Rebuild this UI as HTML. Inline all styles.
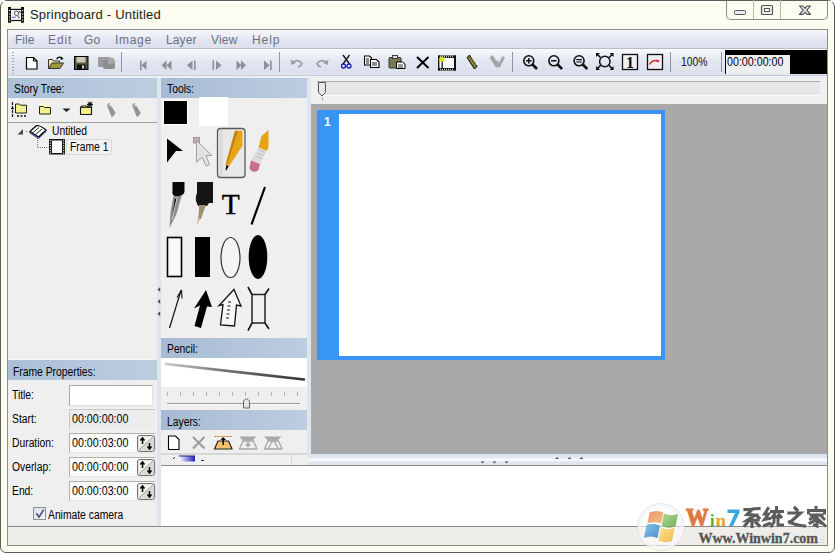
<!DOCTYPE html>
<html><head><meta charset="utf-8">
<style>
*{margin:0;padding:0;box-sizing:border-box}
html,body{width:835px;height:553px;overflow:hidden;background:#fff}
body{position:relative;font-family:"Liberation Sans",sans-serif;font-size:11px;color:#000}
.a{position:absolute}
.t{position:absolute;white-space:nowrap;line-height:1}
.u{position:absolute;white-space:nowrap;line-height:1;font-size:12px;transform:scaleX(.86);transform-origin:0 0}
</style></head><body>
<!-- window frame -->
<div class="a" style="left:0;top:0;width:835px;height:553px;background:#fcfcf0;border:1px solid #5c5c58;border-radius:7px 7px 6px 6px"></div>
<div class="a" style="left:1px;top:1px;width:833px;height:1px;background:#fff;border-radius:6px 6px 0 0"></div>

<!-- title -->
<div class="a" id="appicon" style="left:8px;top:7px;width:16px;height:16px"></div>
<div class="t" style="left:30px;top:8px;font-size:13px;letter-spacing:0.2px;color:#1a1a1a">Springboard - Untitled</div>

<!-- caption buttons -->
<div class="a" style="left:726px;top:0px;width:102px;height:20px;border:1px solid #8a8a80;border-top:1px solid #5c5c58;border-radius:0 0 5px 5px;background:#fcfcf0"></div>
<div class="a" style="left:753px;top:0;width:1px;height:19px;background:#b8b8ae"></div>
<div class="a" style="left:780px;top:0;width:1px;height:19px;background:#b8b8ae"></div>

<!-- inner client frame -->
<div class="a" style="left:7px;top:29px;width:821px;height:517px;border:1px solid #8c8c88;background:#f0f0f0"></div>

<!-- menu bar -->
<div class="a" style="left:8px;top:30px;width:819px;height:18px;background:linear-gradient(#f6f7fb 0%,#eceef6 35%,#e1e4f0 60%,#dde1ee 100%)"></div>
<div class="a" style="left:8px;top:48px;width:819px;height:1px;background:#b9bdc8"></div>

<!-- toolbar -->
<div class="a" style="left:8px;top:49px;width:819px;height:27px;background:linear-gradient(#fbfcfe 0%,#f2f4f9 12%,#e2e6f1 45%,#dce1ee 80%,#e0e4ef 100%)"></div>
<div class="a" style="left:8px;top:75px;width:819px;height:1px;background:#c5cbd8"></div>

<!-- panels background area -->
<div class="a" style="left:8px;top:76px;width:819px;height:450px;background:#dde6ef"></div>

<div class="a" style="left:8px;top:76px;width:819px;height:2px;background:linear-gradient(#f4f6fa,#e6ebf2)"></div>
<!-- story tree panel -->
<div class="a" style="left:8px;top:78px;width:149px;height:282px;background:#efefef"></div>
<div class="a" style="left:8px;top:359px;width:149px;height:1px;background:#f4f6fa"></div>
<div class="a" style="left:8px;top:78px;width:149px;height:20px;background:linear-gradient(90deg,#abc0d7,#bccde0)"></div>
<div class="a" style="left:8px;top:122px;width:149px;height:1px;background:#a0a0a0"></div>

<!-- frame properties panel -->
<div class="a" style="left:8px;top:360px;width:149px;height:166px;background:#efefef"></div>
<div class="a" style="left:8px;top:360px;width:149px;height:20px;background:linear-gradient(90deg,#abc0d7,#bccde0)"></div>

<!-- tools panel -->
<div class="a" style="left:161px;top:78px;width:146px;height:260px;background:#efefef"></div>
<div class="a" style="left:161px;top:78px;width:146px;height:20px;background:linear-gradient(90deg,#a6bbd3,#bccde0)"></div>

<!-- pencil panel -->
<div class="a" style="left:161px;top:338px;width:146px;height:72px;background:#efefef"></div>
<div class="a" style="left:161px;top:338px;width:146px;height:20px;background:linear-gradient(90deg,#a6bbd3,#bccde0)"></div>
<div class="a" style="left:161px;top:358px;width:146px;height:29px;background:#fff"></div>

<!-- layers panel -->
<div class="a" style="left:161px;top:410px;width:146px;height:55px;background:#efefef"></div>
<div class="a" style="left:291px;top:455px;width:1px;height:10px;background:#d8d8d8"></div>
<div class="a" style="left:161px;top:410px;width:146px;height:20px;background:linear-gradient(90deg,#a6bbd3,#bccde0)"></div>

<!-- canvas area -->
<div class="a" style="left:311px;top:78px;width:516px;height:26px;background:#f0f0f0"></div>
<div class="a" style="left:311px;top:104px;width:516px;height:350px;background:#a9a9a9"></div>
<div class="a" style="left:317px;top:110px;width:348px;height:250px;background:#3895f4"></div>
<div class="a" style="left:339px;top:114px;width:322px;height:242px;background:#fff"></div>

<div class="a" style="left:311px;top:450px;width:516px;height:4px;background:linear-gradient(#a8a9ac,#a2a7b0)"></div>
<div class="a" style="left:307px;top:454px;width:520px;height:11px;background:linear-gradient(#dee4ed 0%,#e2e8f0 35%,#f6fbfd 45%,#f3f8fb 62%,#e2e6ef 70%,#e0e3ed 100%)"></div>
<!-- bottom panel -->
<div class="a" style="left:161px;top:465px;width:666px;height:61px;background:#fff;border-top:1px solid #8a8a8a"></div>

<!-- status bar -->
<div class="a" style="left:8px;top:526px;width:819px;height:19px;background:#efedea;border-top:1px solid #8c8c8c"></div>

<!-- text -->
<div class="u" style="left:13.5px;top:82.6px">Story Tree:</div>
<div class="u" style="left:167px;top:82.7px">Tools:</div>
<div class="u" style="left:13px;top:366px">Frame Properties:</div>
<div class="u" style="left:166.5px;top:343px">Pencil:</div>
<div class="u" style="left:166.5px;top:415.5px">Layers:</div>


<!-- menu text -->
<div class="t" style="left:15px;top:34px;font-size:12px;color:#6b7080">File</div>
<div class="t" style="left:48px;top:34px;font-size:12px;color:#6b7080;letter-spacing:0.9px">Edit</div>
<div class="t" style="left:84px;top:34px;font-size:12px;color:#6b7080;letter-spacing:0.2px">Go</div>
<div class="t" style="left:115px;top:34px;font-size:12px;color:#6b7080;letter-spacing:0.7px">Image</div>
<div class="t" style="left:166px;top:34px;font-size:12px;color:#6b7080;letter-spacing:0.1px">Layer</div>
<div class="t" style="left:211px;top:34px;font-size:12px;color:#6b7080;letter-spacing:0.2px">View</div>
<div class="t" style="left:252px;top:34px;font-size:12px;color:#6b7080;letter-spacing:0.9px">Help</div>


<div class="u" style="left:680.7px;top:56.1px;color:#111">100%</div>
<div class="a" style="left:725px;top:50px;width:102px;height:24px;background:#000"></div>
<div class="a" style="left:726px;top:55px;width:64px;height:19px;background:#eceeF2"></div>
<div class="u" style="left:726.5px;top:56.2px;transform:scaleX(.89)">00:00:00:00</div>

<!-- slider top -->
<div class="a" style="left:317px;top:81px;width:503px;height:15px;background:#e5e7e9;border-top:1px solid #a9abae;border-bottom:1px solid #fafafa"></div>
<!-- frame label -->
<div class="t" style="left:324px;top:116px;font-size:12px;font-weight:bold;color:#fff">1</div>

<!-- tree -->
<div class="u" style="left:51.8px;top:124.8px">Untitled</div>
<div class="a" style="left:66px;top:139px;width:46px;height:16px;background:#f2f2f2;border:1px solid #d8d8d8;border-radius:2px"></div>
<div class="u" style="left:69.6px;top:140.8px">Frame 1</div>

<!-- frame properties -->
<div class="u" style="left:12px;top:389px">Title:</div>
<div class="u" style="left:12px;top:413px">Start:</div>
<div class="u" style="left:12px;top:437px">Duration:</div>
<div class="u" style="left:12px;top:461px">Overlap:</div>
<div class="u" style="left:12px;top:485px">End:</div>
<div class="a" style="left:69px;top:385px;width:84px;height:21px;background:#fff;border:1px solid;border-color:#a8a8a8 #e2e2e2 #e2e2e2 #a8a8a8"></div>
<div class="a" style="left:69px;top:409px;width:87px;height:21px;background:#ececec;border:1px solid;border-color:#c8c8c8 #f4f4f4 #f4f4f4 #c8c8c8"></div>
<div class="a" style="left:69px;top:433px;width:87px;height:20px;background:#fbfbfb;border:1px solid;border-color:#b0b0b0 #e4e4e4 #e4e4e4 #b0b0b0"></div>
<div class="a" style="left:69px;top:457px;width:87px;height:20px;background:#fbfbfb;border:1px solid;border-color:#b0b0b0 #e4e4e4 #e4e4e4 #b0b0b0"></div>
<div class="a" style="left:69px;top:481px;width:87px;height:20px;background:#fbfbfb;border:1px solid;border-color:#b0b0b0 #e4e4e4 #e4e4e4 #b0b0b0"></div>
<div class="u" style="left:71.6px;top:412.6px;transform:scaleX(.89)">00:00:00:00</div>
<div class="u" style="left:71.6px;top:436.6px;transform:scaleX(.89)">00:00:03:00</div>
<div class="u" style="left:71.6px;top:460.6px;transform:scaleX(.89)">00:00:00:00</div>
<div class="u" style="left:71.6px;top:484.6px;transform:scaleX(.89)">00:00:03:00</div>
<div class="a" style="left:33px;top:507px;width:13px;height:13px;background:linear-gradient(135deg,#dde0ea,#f4f5f8);border:1px solid #8e8f8f"></div>
<div class="u" style="left:47.8px;top:509px">Animate camera</div>
<!-- icon overlay -->
<svg class="a" style="left:0;top:0" width="835" height="553" viewBox="0 0 835 553">
<!-- app icon -->
<g>
<rect x="8" y="7" width="3" height="15.7" fill="#111"/>
<rect x="21" y="7" width="3" height="15.7" fill="#111"/>
<rect x="11" y="8.8" width="10" height="1.3" fill="#111"/>
<rect x="11" y="19.7" width="10" height="1.4" fill="#111"/>
<rect x="11" y="10.1" width="10" height="9.6" fill="#f4f4f8"/>
<g fill="#e8e8e8"><rect x="9" y="10" width="1.2" height="1.2"/><rect x="9" y="13.5" width="1.2" height="1.2"/><rect x="9" y="16.5" width="1.2" height="1.2"/><rect x="9" y="19.5" width="1.2" height="1.2"/>
<rect x="22" y="10" width="1.2" height="1.2"/><rect x="22" y="13.5" width="1.2" height="1.2"/><rect x="22" y="16.5" width="1.2" height="1.2"/><rect x="22" y="19.5" width="1.2" height="1.2"/></g>
<circle cx="16.5" cy="13.3" r="2.2" fill="none" stroke="#555" stroke-width="1"/>
<path d="M17.5 15.5 l1.8 2.8 M19 11 l1.5 2" stroke="#555" stroke-width="1.1"/>
<path d="M11.5 17.5 q2.5 -0.5 4.5 -0.3" stroke="#7a70c8" stroke-width="1.1" fill="none"/>
</g>
<!-- caption buttons glyphs -->
<rect x="734.5" y="10.5" width="11" height="4" rx="1" fill="#e8eaf0" stroke="#555" stroke-width="1"/>
<rect x="761.5" y="5.5" width="11" height="9" rx="1" fill="#eee" stroke="#555" stroke-width="1.2"/>
<rect x="764.5" y="8.5" width="5" height="3" fill="#fff" stroke="#555" stroke-width="1"/>
<path d="M799.5 6 h3.5 l2 2.3 l2 -2.3 h3.5 l-3.8 4.2 l3.8 4.2 h-3.5 l-2 -2.3 l-2 2.3 h-3.5 l3.8 -4.2z" fill="#f0f0f4" stroke="#4a4a4a" stroke-width="1.1" stroke-linejoin="round"/>

<!-- toolbar gripper -->
<g fill="#a0a8bc"><rect x="12" y="52" width="2" height="1"/><rect x="12" y="55" width="2" height="1"/><rect x="12" y="58" width="2" height="1"/><rect x="12" y="61" width="2" height="1"/><rect x="12" y="64" width="2" height="1"/><rect x="12" y="67" width="2" height="1"/><rect x="12" y="70" width="2" height="1"/><rect x="12" y="73" width="2" height="1"/></g>
<!-- new doc -->
<path d="M26.5 57.5 h7 l3.5 3.5 v8 h-10.5 z" fill="#fff" stroke="#000" stroke-width="1.2"/>
<path d="M33.5 57.5 v3.5 h3.5" fill="none" stroke="#000" stroke-width="1"/>
<!-- open -->
<path d="M48.5 59.5 h4 l1 1.5 h6 v7.5 h-11z" fill="#ece6a0" stroke="#333" stroke-width="1"/>
<path d="M48.5 68.5 l3.5 -5.5 h11.5 l-3.5 5.5z" fill="#9c9a3c" stroke="#333" stroke-width="1"/>
<path d="M56.5 59 q3 -3.5 6 -0.5" fill="none" stroke="#000" stroke-width="1.2"/>
<path d="M61 56.5 l2.5 2.5 l-3 1z" fill="#000"/>
<!-- save -->
<rect x="74.5" y="56.5" width="13.5" height="13" fill="#5a5a3a" stroke="#000" stroke-width="1"/>
<rect x="76.5" y="57" width="9" height="5.5" fill="#c9c9bd"/>
<rect x="77" y="64.5" width="8.5" height="5" fill="#111"/>
<rect x="82" y="65.5" width="2" height="3" fill="#ddd"/>
<!-- disabled blob -->
<g fill="#9a9a9a"><rect x="98" y="57" width="12" height="10" rx="1"/><rect x="103" y="60" width="12" height="9" rx="2" fill="#8c8c8c"/><circle cx="111" cy="61" r="3.5" fill="#a6a6a6"/></g>
<!-- separators -->
<g fill="#8e94a4"><rect x="121" y="52" width="1" height="20"/><rect x="279" y="52" width="1" height="20"/><rect x="512" y="52" width="1" height="20"/><rect x="670" y="52" width="1" height="20"/><rect x="721" y="52" width="1" height="20"/></g>
<!-- nav icons -->
<g fill="#8c8f98">
<rect x="140" y="60.5" width="1.6" height="9.5"/><path d="M146.5 60.5 v9.5 l-5 -4.75z"/>
<path d="M166.5 60.5 v9.5 l-5 -4.75z"/><path d="M171.5 60.5 v9.5 l-5 -4.75z"/>
<path d="M192.5 60.5 v9.5 l-5.5 -4.75z"/><rect x="194" y="60.5" width="1.6" height="9.5"/>
<rect x="212.5" y="60.5" width="1.6" height="9.5"/><path d="M216 60.5 v9.5 l5.5 -4.75z"/>
<path d="M236.5 60.5 v9.5 l5 -4.75z"/><path d="M241 60.5 v9.5 l5 -4.75z"/>
<path d="M264 60.5 v9.5 l5.5 -4.75z"/><rect x="270" y="60.5" width="1.6" height="9.5"/>
</g>
<!-- undo/redo -->
<path d="M292 63 q5 -5 10 0.5 q-1 3 -4 3.5" fill="none" stroke="#9a9ca4" stroke-width="1.6"/>
<path d="M290.5 59.5 l1 5.5 l4.5 -2z" fill="#9a9ca4"/>
<path d="M327 63 q-5 -5 -10 0.5 q1 3 4 3.5" fill="none" stroke="#9a9ca4" stroke-width="1.6"/>
<path d="M328.5 59.5 l-1 5.5 l-4.5 -2z" fill="#9a9ca4"/>
<!-- scissors -->
<path d="M343 55 l6.5 9 M349.5 55 l-6.5 9" stroke="#111" stroke-width="1.3"/>
<circle cx="343.5" cy="66" r="2" fill="none" stroke="#1a20a8" stroke-width="1.3"/>
<circle cx="349" cy="66" r="2" fill="none" stroke="#1a20a8" stroke-width="1.3"/>
<!-- copy -->
<path d="M364.5 56 h5 l2 2 v7 h-7z" fill="#fff" stroke="#000" stroke-width="1.1"/>
<path d="M370.5 59.5 h6 l2.5 2.5 v5.5 h-8.5z" fill="#fff" stroke="#000" stroke-width="1.1"/>
<path d="M366 59 h3 M366 61 h3 M366 63 h3 M372 63 h5 M372 65 h5" stroke="#000" stroke-width="0.9"/>
<!-- paste -->
<rect x="389" y="57.5" width="12" height="10.5" rx="1" fill="#7c7a50" stroke="#333" stroke-width="1"/>
<rect x="392.5" y="55.5" width="5" height="3" fill="#ddd" stroke="#333" stroke-width="0.9"/>
<path d="M396.5 62 h6 l2.5 2 v4.5 h-8.5z" fill="#fff" stroke="#000" stroke-width="1"/>
<path d="M398 65 h5 M398 67 h5" stroke="#000" stroke-width="0.8"/>
<!-- delete X -->
<path d="M417 57 l11.5 11 M428.5 57 l-11.5 11" stroke="#000" stroke-width="2"/>
<!-- film new -->
<rect x="438" y="55.5" width="18" height="2.5" fill="#111"/>
<rect x="438" y="68" width="18" height="2.5" fill="#111"/>
<rect x="438" y="55.5" width="1.6" height="15" fill="#111"/>
<rect x="454" y="55.5" width="2" height="15" fill="#111"/>
<rect x="439.6" y="58" width="14.4" height="10" fill="#fcfcfc"/>
<g fill="#fff"><rect x="440" y="56.3" width="1" height="1"/><rect x="442" y="56.3" width="1" height="1"/><rect x="444" y="56.3" width="1" height="1"/><rect x="446" y="56.3" width="1" height="1"/><rect x="448" y="56.3" width="1" height="1"/><rect x="450" y="56.3" width="1" height="1"/><rect x="452" y="56.3" width="1" height="1"/>
<rect x="440" y="68.8" width="1" height="1"/><rect x="442" y="68.8" width="1" height="1"/><rect x="444" y="68.8" width="1" height="1"/><rect x="446" y="68.8" width="1" height="1"/><rect x="448" y="68.8" width="1" height="1"/><rect x="450" y="68.8" width="1" height="1"/><rect x="452" y="68.8" width="1" height="1"/></g>
<rect x="441.5" y="60" width="1.3" height="8" fill="#111"/>
<path d="M442 55.5 l0.8 2 2 -1 -1 2 2 0.8 -2 0.8 1 2 -2 -1 -0.8 2 -0.8 -2 -2 1 1 -2 -2 -0.8 2 -0.8 -1 -2 2 1z" fill="#d8e020"/>
<!-- pencil -->
<path d="M467 57.5 l2.5 -2.5 l7.5 11.5 l-2.5 2.5z" fill="#6a6a30" stroke="#111" stroke-width="1"/>
<path d="M469 58 l6 9 M471 57.5 l5 7.5" stroke="#e0e060" stroke-width="0.8" stroke-dasharray="1 1"/>
<!-- grey W -->
<g fill="#a4a4a4"><path d="M489.5 57.5 l3 -2.5 l5.5 8.5 l-2 4z"/><path d="M495 63 l3 -3 l1.5 5 l-2.5 3z"/><path d="M497.5 66 l5 -10 l2.5 1.5 l-5.5 10.5z"/></g>
<!-- zoom in/out/= -->
<g fill="none" stroke="#111" stroke-width="1.6">
<circle cx="528.8" cy="60.8" r="5"/><path d="M532.5 64.5 l4.5 4.5" stroke-width="2.6"/><path d="M526 60.8 h5.6 M528.8 58 v5.6" stroke-width="1.5"/>
<circle cx="553.9" cy="60.8" r="5"/><path d="M557.6 64.5 l4.5 4.5" stroke-width="2.6"/><path d="M551 60.8 h5.6" stroke-width="1.5"/>
<circle cx="579.1" cy="60.8" r="5"/><path d="M582.8 64.5 l4.5 4.5" stroke-width="2.6"/><path d="M576.3 59.6 h5.6 M576.3 62 h5.6" stroke-width="1.2"/>
</g>
<!-- expand -->
<circle cx="604.8" cy="61.5" r="5.2" fill="none" stroke="#111" stroke-width="1.5"/>
<path d="M597 54 l3.5 3.5 M612.6 54 l-3.5 3.5 M597 69 l3.5 -3.5 M612.6 69 l-3.5 -3.5" stroke="#111" stroke-width="1.6"/>
<path d="M596 53 h4 l-4 4z M613.6 53 h-4 l4 4z M596 70 h4 l-4 -4z M613.6 70 h-4 l4 -4z" fill="#111"/>
<!-- 1 box -->
<rect x="622.5" y="54.5" width="15" height="15" fill="#eef0f4" stroke="#111" stroke-width="1.3"/>
<text x="630" y="68.3" text-anchor="middle" font-family="Liberation Serif" font-weight="bold" font-size="16" fill="#111">1</text>
<!-- red curve box -->
<rect x="647.5" y="54.5" width="15" height="15" fill="#f2eef0" stroke="#111" stroke-width="1.3"/>
<path d="M649.5 64.5 q3 -5.5 9.5 -3.5" fill="none" stroke="#d03040" stroke-width="1.5"/>
<path d="M656 59.5 l4 1.5 l-3 1.5z" fill="#d03040"/>

<!-- slider thumb -->
<path d="M318.5 82.5 h7 v10 l-3.5 3.5 l-3.5 -3.5z" fill="#e8e8e8" stroke="#555" stroke-width="1"/>
<rect x="322" y="97" width="1" height="4" fill="#b0b0b0"/>

<!-- story toolbar -->
<path d="M12.5 102 v15" stroke="#111" stroke-width="1.2" stroke-dasharray="3 1"/>
<path d="M11 108.5 h3" stroke="#111" stroke-width="1.2"/>
<path d="M15.5 104 h4 l1 1.2 h6 v7.8 h-11z" fill="#f2ef8c" stroke="#222" stroke-width="1"/>
<path d="M17 116 h2 M20.5 116 h2 M24 116 h2" stroke="#111" stroke-width="1.4"/>
<circle cx="45" cy="109" r="6.5" fill="#faf8c8" opacity="0.8"/>
<path d="M39.5 106.5 h4 l1 1 h6 v6.5 h-11z" fill="#f2ef8c" stroke="#222" stroke-width="1"/>
<path d="M62.5 108.5 h8 l-4 3.5z" fill="#222"/>
<path d="M80.5 107.5 l1.5 -1.5 h5 l1.5 1.5 h3 v7 h-11z" fill="#f2ef8c" stroke="#111" stroke-width="1.1"/>
<path d="M81 107.5 h9" stroke="#111" stroke-width="0.8"/>
<path d="M90 101.5 v6 M87 104.5 h6 M87.8 102.3 l4.4 4.4 M92.2 102.3 l-4.4 4.4" stroke="#111" stroke-width="1.1"/>
<path d="M107 105.5 q0.5 -2.5 2.5 -2.5 l6 10 l-2.5 3.5 l-1.5 0.3z" fill="#949494"/>
<path d="M108.5 105 l1.5 -1 l1.5 3z" fill="#f0f0f0"/>
<path d="M132.2 105.5 q0.5 -2.5 2.5 -2.5 l6 10 l-2.5 3.5 l-1.5 0.3z" fill="#949494"/>
<path d="M133.7 105 l1.5 -1 l1.5 3z" fill="#f0f0f0"/>
<!-- tree -->
<path d="M17.5 134.5 l5.5 -5.5 v5.5z" fill="#4a4a4a"/>
<path d="M25.5 131.5 h2" stroke="#999" stroke-width="1"/>
<path d="M30 131.5 l6.5 -6 q4 0 9.5 4.5 l-7.5 7z" fill="#fff" stroke="#000" stroke-width="1.2" stroke-linejoin="round"/>
<path d="M32.5 133 l6.5 -5.5 M35.5 134.5 l6.5 -5.5" stroke="#000" stroke-width="0.9"/>
<path d="M30 131.5 v1.5 l8.5 5.5 l7.5 -7 v-1.5" fill="none" stroke="#1a2a90" stroke-width="1"/>
<path d="M37.5 138 v9.5 h11" fill="none" stroke="#777" stroke-width="1" stroke-dasharray="1 1"/>
<rect x="49" y="139" width="16" height="15.5" fill="#111"/>
<rect x="52" y="140.5" width="10" height="12.5" fill="#fafafa"/>
<g fill="#ddd"><rect x="49.8" y="140" width="1.3" height="1.2"/><rect x="49.8" y="142.5" width="1.3" height="1.2"/><rect x="49.8" y="145" width="1.3" height="1.2"/><rect x="49.8" y="147.5" width="1.3" height="1.2"/><rect x="49.8" y="150" width="1.3" height="1.2"/><rect x="49.8" y="152.5" width="1.3" height="1.2"/>
<rect x="62.9" y="140" width="1.3" height="1.2"/><rect x="62.9" y="142.5" width="1.3" height="1.2"/><rect x="62.9" y="145" width="1.3" height="1.2"/><rect x="62.9" y="147.5" width="1.3" height="1.2"/><rect x="62.9" y="150" width="1.3" height="1.2"/><rect x="62.9" y="152.5" width="1.3" height="1.2"/></g>

<!-- tools: swatches -->
<rect x="163.5" y="100.5" width="24" height="24" fill="#000" stroke="#fff" stroke-width="1"/>
<rect x="199" y="97" width="29" height="29" fill="#fff"/>
<!-- arrow -->
<path d="M167 138.5 l16 12.5 h-7 l-9 11.5z" fill="#000"/>
<!-- grey arrow -->
<rect x="193.5" y="137.5" width="6" height="5.5" fill="#c4aab8" stroke="#a08898" stroke-width="0.8"/>
<path d="M196.5 140.5 l15.5 15 h-6 l3.5 9 l-3.5 1.5 l-3.8 -8.8 l-5.7 5z" fill="#e2e2e2" stroke="#a0a0a0" stroke-width="1"/>
<!-- selected button -->
<rect x="217.5" y="128.5" width="27.5" height="49" rx="3" fill="#e8e8e8" stroke="#5a5a5a" stroke-width="1.3"/>
<rect x="219" y="130" width="4" height="46" fill="#dcdcdc"/>
<path d="M235 130.8 h7.5 v15 l-13.8 21 l-3 -1.2 l0.8 -4.5z" fill="#e8a418"/>
<path d="M235 130.8 l3 0.5 l-10 31 l-2.5 3z" fill="#c88410"/>
<path d="M226.3 165 l2.5 1.5 l-2.8 4.3 l-0.5 -1z" fill="#111"/>
<!-- eraser pencil -->
<path d="M261.5 136 l7 -6 v18 l-2 3 l-8 -3.5z" fill="#e4a414"/>
<path d="M258.5 147.5 l8 3.5 l-6.5 13 l-9 -3.5z" fill="#dcdcdc"/>
<path d="M259 150 l6 2.5 M257.5 153 l6 2.5 M256 156 l6 2.5" stroke="#b8b8b8" stroke-width="0.8"/>
<path d="M251 160.5 l9 3.5 l-1.5 6 q-2 2.5 -5.5 1.5 q-3.5 -1 -3.5 -4z" fill="#c87088"/>
<!-- pens -->
<path d="M172.5 182 h12 v9 q0 4 -5 5 h-5 q-3 -2 -2 -5z" fill="#0a0a0a"/>
<path d="M173.5 196 h8 l-5 18 l-7 14 l1 -16z" fill="#8a8c90"/>
<path d="M175 198 l2 0 l-5 22" stroke="#d0d0d0" stroke-width="1"/>
<path d="M197 182 h16 v21 h-4 l-2 3 h-9 l-2 -5 q-1 -4 1 -8z" fill="#151515"/>
<path d="M199 205 h7 l-3 8 l-2 6 h-3 l1 -8z" fill="#a09070"/>
<path d="M198 218 l2 0 l-3 8z" fill="#c8b080"/>
<!-- T -->
<text x="230.7" y="214.3" text-anchor="middle" font-family="Liberation Serif" font-size="29.5" stroke="#000" stroke-width="0.4" fill="#000">T</text>
<!-- line -->
<path d="M265 187 l-13.5 37.5" stroke="#000" stroke-width="2.2"/>
<!-- rects & ellipses -->
<rect x="167.5" y="237.5" width="14" height="39" fill="#f8f8f8" stroke="#000" stroke-width="1.6"/>
<rect x="195" y="237" width="15" height="40" fill="#000"/>
<ellipse cx="230.5" cy="257.5" rx="9.5" ry="20" fill="#f4f4f4" stroke="#333" stroke-width="1.2"/>
<ellipse cx="258" cy="257" rx="9.3" ry="22" fill="#000"/>
<!-- thin arrow -->
<path d="M169.5 328 l11.5 -37.5" stroke="#111" stroke-width="1.2"/>
<path d="M181.5 290 l-4.5 7.5 M181.5 290 l0.5 8.5" stroke="#111" stroke-width="1.1"/>
<!-- thick arrow -->
<path d="M206 290 l6 17 l-5 -0.5 l-6 21.5 l-6.5 -2 l5.5 -20.5 l-6 3z" fill="#000"/>
<!-- outline arrow -->
<path d="M234 289.5 l7 16.5 l-4.5 -1 l-2 21 l-14 -1 l2.5 -20.5 l-4 1z" fill="#f8f8f8" stroke="#111" stroke-width="1.3"/>
<path d="M228 302 h3 M227.5 306 h3 M227 310 h3 M226.5 314 h3 M226 318 h3" stroke="#111" stroke-width="1.1"/>
<!-- bracket -->
<rect x="252" y="294.5" width="13" height="28.5" fill="none" stroke="#222" stroke-width="1.5"/>
<path d="M252 294.5 l-4 -7.5 M265 294.5 l4 -6 M252 323 l-4 7.5 M265 323 l4 6" stroke="#111" stroke-width="1.6"/>
<!-- splitter arrows left -->
<path d="M160.2 287 v5 l-2.7 -2.5z M160.2 299 v5 l-2.7 -2.5z M160.2 311.3 v5 l-2.7 -2.5z" fill="#4a4e58"/>

<!-- pencil preview line -->
<path d="M166 364 L304 379.5" stroke="url(#plg)" stroke-width="2.6" stroke-linecap="round"/>
<defs><linearGradient id="plg" x1="0" x2="1"><stop offset="0" stop-color="#c8c8c8"/><stop offset="0.4" stop-color="#777"/><stop offset="1" stop-color="#333"/></linearGradient></defs>
<!-- slider ticks -->
<g fill="#b0b0b0"><rect x="167" y="392" width="1" height="4"/><rect x="180" y="392" width="1" height="4"/><rect x="193" y="392" width="1" height="4"/><rect x="206" y="392" width="1" height="4"/><rect x="219" y="392" width="1" height="4"/><rect x="232" y="392" width="1" height="4"/><rect x="245" y="392" width="1" height="4"/><rect x="258" y="392" width="1" height="4"/><rect x="271" y="392" width="1" height="4"/><rect x="284" y="392" width="1" height="4"/><rect x="297" y="392" width="1" height="4"/></g>
<rect x="167" y="403" width="133" height="1" fill="#9a9a9a"/>
<rect x="167" y="404" width="133" height="1" fill="#fafafa"/>
<path d="M243.5 408 v-7 l3 -2.5 l3 2.5 v7z" fill="#e4e4e4" stroke="#666" stroke-width="1"/>

<!-- layers toolbar -->
<path d="M168.5 436 h7 l3.5 3.5 v10 h-10.5z" fill="#fff" stroke="#000" stroke-width="1.1"/>
<path d="M193 437 l11.5 11.5 M204.5 437 l-11.5 11.5" stroke="#9a9a9a" stroke-width="2"/>
<path d="M214.5 436.5 h17" stroke="#c08000" stroke-width="1.2" stroke-dasharray="2 1"/>
<path d="M214.5 449 l3.5 -8 h10.5 l3.5 8z" fill="#f4c070" stroke="#222" stroke-width="1.2"/>
<path d="M223.2 445 v-7" stroke="#000" stroke-width="1.4"/><path d="M220.5 440 l2.7 -3 l2.7 3z" fill="#000"/>
<path d="M239 436.5 h17.5 l-4 4 h-9.5z" fill="#a8a8a8"/>
<path d="M239.5 449 l3.5 -8 h10.5 l3.5 8z" fill="none" stroke="#a8a8a8" stroke-width="1.3"/>
<path d="M248 441 v5 M246 444 l2 2.5 l2 -2.5" stroke="#a0a0a0" stroke-width="1.3" fill="none"/>
<path d="M264 436.5 h17.5 l-4 4 h-9.5z" fill="#a8a8a8"/>
<path d="M264.5 449 l3.5 -8 h10.5 l3.5 8z" fill="none" stroke="#a8a8a8" stroke-width="1.3"/>
<path d="M268 449 l4.5 -8 M278.5 449 l-4.5 -8" stroke="#a8a8a8" stroke-width="1.3"/>
<rect x="161" y="453.5" width="146" height="1" fill="#c0c0c0"/>
<rect x="179" y="456" width="16" height="5.5" fill="url(#blg)"/><rect x="179" y="455.5" width="16" height="1" fill="#202080"/><rect x="201" y="460" width="3" height="1" fill="#333"/>
<defs><linearGradient id="blg" x1="0" x2="1"><stop offset="0" stop-color="#fff"/><stop offset="1" stop-color="#2020c0"/></linearGradient></defs>
<path d="M173 459 l2 -2" stroke="#333" stroke-width="1"/>

<!-- spinners -->
<g>
<rect x="137.5" y="435.5" width="17" height="16" rx="2" fill="#d8d8d8" stroke="#777" stroke-width="1"/>
<path d="M138.5 450.5 v-14 h15z" fill="#f0f0f0"/>
<path d="M138.5 450.5 l15 -14" stroke="#888" stroke-width="0.8"/>
<path d="M142.5 444 v-5 M140.5 440.5 l2 -2.5 l2 2.5" stroke="#000" stroke-width="1.5" fill="none"/>
<path d="M149.5 443 v5 M147.5 446.5 l2 2.5 l2 -2.5" stroke="#000" stroke-width="1.5" fill="none"/>
</g><g transform="translate(0,24)">
<rect x="137.5" y="435.5" width="17" height="16" rx="2" fill="#d8d8d8" stroke="#777" stroke-width="1"/>
<path d="M138.5 450.5 v-14 h15z" fill="#f0f0f0"/>
<path d="M138.5 450.5 l15 -14" stroke="#888" stroke-width="0.8"/>
<path d="M142.5 444 v-5 M140.5 440.5 l2 -2.5 l2 2.5" stroke="#000" stroke-width="1.5" fill="none"/>
<path d="M149.5 443 v5 M147.5 446.5 l2 2.5 l2 -2.5" stroke="#000" stroke-width="1.5" fill="none"/>
</g><g transform="translate(0,48)">
<rect x="137.5" y="435.5" width="17" height="16" rx="2" fill="#d8d8d8" stroke="#777" stroke-width="1"/>
<path d="M138.5 450.5 v-14 h15z" fill="#f0f0f0"/>
<path d="M138.5 450.5 l15 -14" stroke="#888" stroke-width="0.8"/>
<path d="M142.5 444 v-5 M140.5 440.5 l2 -2.5 l2 2.5" stroke="#000" stroke-width="1.5" fill="none"/>
<path d="M149.5 443 v5 M147.5 446.5 l2 2.5 l2 -2.5" stroke="#000" stroke-width="1.5" fill="none"/>
</g>

<!-- checkbox tick -->
<path d="M36.2 513.2 l2.8 3.8 l4.8 -7.5" fill="none" stroke="#4c5884" stroke-width="1.7"/>

<!-- bottom splitter arrows -->
<path d="M480.5 461.5 h4 l-2 2z M492.5 461.5 h4 l-2 2z M504.5 461.5 h4 l-2 2z" fill="#556"/>
<path d="M555 459 h4 l-2 -2z M567.5 459 h4 l-2 -2z M579.5 459 h4 l-2 -2z" fill="#556"/>

<g fill="#c8c8c8"><rect x="823" y="536" width="1" height="1"/><rect x="821" y="539" width="1" height="1"/><rect x="823" y="539" width="1" height="1"/><rect x="819" y="542" width="1" height="1"/><rect x="821" y="542" width="1" height="1"/><rect x="823" y="542" width="1" height="1"/></g>
<!-- watermark -->
<defs>
<radialGradient id="orb" cx="0.5" cy="0.45" r="0.55"><stop offset="0" stop-color="#ffffff"/><stop offset="0.75" stop-color="#f2f2f2"/><stop offset="1" stop-color="#d8d8d8"/></radialGradient>
</defs>
<circle cx="661" cy="527" r="23.3" fill="#ffffff" fill-opacity="0.55" stroke="#d8d8dc" stroke-width="1" stroke-opacity="0.8"/>
<circle cx="661" cy="527" r="21" fill="none" stroke="#f4f4f8" stroke-width="3" stroke-opacity="0.6"/>
<defs>
<linearGradient id="fr" x1="0" y1="0" x2="1" y2="1"><stop offset="0" stop-color="#e88060"/><stop offset="1" stop-color="#f0b860"/></linearGradient>
<linearGradient id="fg" x1="0" y1="0" x2="1" y2="1"><stop offset="0" stop-color="#a8d080"/><stop offset="1" stop-color="#58a040"/></linearGradient>
<linearGradient id="fb" x1="0" y1="0" x2="1" y2="1"><stop offset="0" stop-color="#68c0e8"/><stop offset="1" stop-color="#3878c0"/></linearGradient>
<linearGradient id="fy" x1="0" y1="0" x2="1" y2="1"><stop offset="0" stop-color="#f8e080"/><stop offset="1" stop-color="#f0b030"/></linearGradient>
</defs>
<path d="M649.5 512.5 q7 -3 14 0 l-2.5 11 q-6.5 -2.5 -13.5 0z" fill="url(#fr)" opacity="0.85"/>
<path d="M664 513.5 q7 3 14 0.5 l-2.5 12.5 q-7 2.5 -14 -0.5z" fill="url(#fg)" opacity="0.85"/>
<path d="M646.5 525 q6.5 -2.5 13.5 0.5 l-2.5 12.5 q-6.5 -3 -13.5 0z" fill="url(#fb)" opacity="0.85"/>
<path d="M661 527.5 q6.5 3 13.5 0.5 l-2.5 13 q-7 2.5 -13.5 -0.5z" fill="url(#fy)" opacity="0.85"/>
<text x="686" y="526" font-family="Liberation Serif" font-weight="bold" font-size="25" textLength="22.5" lengthAdjust="spacingAndGlyphs" fill="#e07840" stroke="#e07840" stroke-width="1.2">W</text>
<text x="710" y="526" font-family="Liberation Serif" font-weight="bold" font-size="16" fill="#58a838">i</text>
<text x="715.5" y="526" font-family="Liberation Serif" font-weight="bold" font-size="16" textLength="10.5" lengthAdjust="spacingAndGlyphs" fill="#e8a030">n</text>
<path d="M727.5 509.5 h12 v3 l-6.5 13.5 h-4 l6 -13 h-7.5z" fill="#38a8e0"/>
<g fill="none" stroke="#5c5c5c" stroke-width="3.2" stroke-linecap="square" transform="translate(742,507)">
<path d="M3 2.5 L17 1.5 M10 2.5 L5 7.5 L13 8 L5 13.5 L16 13 M15 9 L17 11 M10 13 V19.5 M5.5 15.5 L3 18.5 M14 15.5 L17 18.5"/>
</g>
<g fill="none" stroke="#5c5c5c" stroke-width="3" stroke-linecap="square" transform="translate(763,507)">
<path d="M5 1.5 L1.5 7 H5.5 L1.5 12.5 L6.5 11.5 M1.5 18.5 L6.5 16.5 M13.5 0.5 V2.5 M8.5 4.5 H19.5 M12.5 5.5 L9.5 10 L17 9.5 M16 7.5 L18 10 M11 11.5 V15 L8.5 19 M15 11.5 V18 H19.5"/>
</g>
<g fill="none" stroke="#5c5c5c" stroke-width="3.2" stroke-linecap="square" transform="translate(785,507)">
<path d="M10 1 L12 3 M4 6 H15.5 L5 15.5 M4.5 15 Q8 17.5 19.5 19"/>
</g>
<g fill="none" stroke="#5c5c5c" stroke-width="3" stroke-linecap="square" transform="translate(806,507)">
<path d="M10 0.5 V2 M2.5 6 V3.5 H18.5 V6 M5 8 H16 M10 8 L4.5 12 M7 11 L15 16 M11 10.5 V19 L8.5 18 M4 16 L10 13 M12.5 12.5 L19 18.5 M15.5 9.5 L18 12"/>
</g>
<text x="698.5" y="543" font-family="Liberation Serif" font-weight="bold" font-size="14" fill="#555" stroke="#555" stroke-width="0.3">Www.Winwin7.com</text>
</svg>
</body></html>
